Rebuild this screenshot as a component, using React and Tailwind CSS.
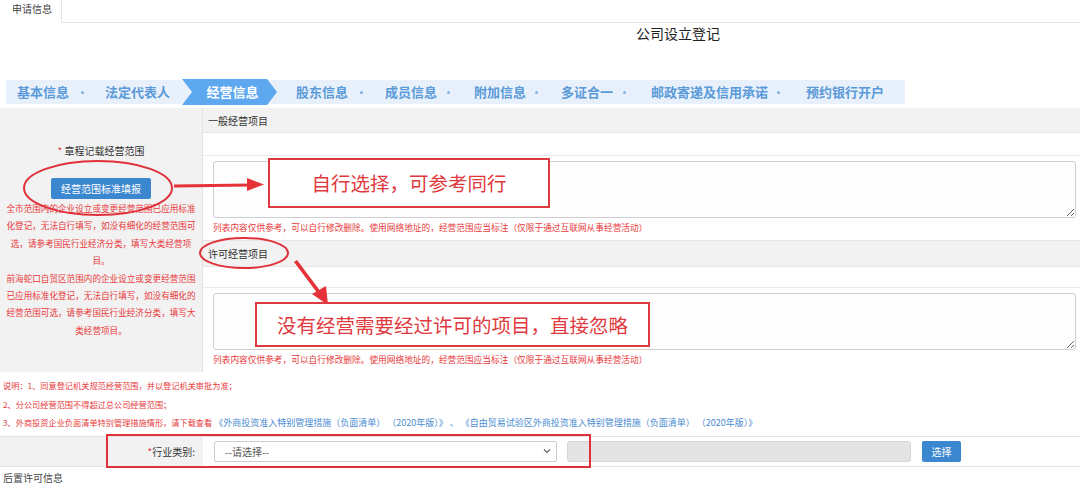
import React from 'react'

const Hint = () => (
  <p className="mt-[4px] text-[8.7px] leading-[12px] text-[#e8393b] whitespace-nowrap">
    列表内容仅供参考，可以自行修改删除。使用网络地址的，经营范围应当标注（仅限于通过互联网从事经营活动）
  </p>
)

const Dot = ({ className }) => (
  <span className={`inline-block w-[3px] h-[3px] rounded-full bg-[#7fb2e5] ${className}`}></span>
)

export default function App() {
  return (
    <div className="relative w-[1080px] h-[483px] overflow-hidden bg-white font-['Microsoft_YaHei','Noto_Sans_CJK_SC',sans-serif] text-[#333]">
      {/* 顶部标签 */}
      <div className="flex h-[23px]">
        <div className="w-[62px] border-r border-[#e6e6e6] pl-[12px] text-[10px] leading-[18px] text-[#444]">申请信息</div>
        <div className="flex-1 border-b border-[#e6e6e6]"></div>
      </div>

      <div className="h-[20px] pl-[636px] text-[14px] leading-[20px] text-[#222]">公司设立登记</div>

      {/* 步骤条 */}
      <div className="mt-[37px] ml-[6px] w-[899px] h-[24px] bg-[#e8f1fb] flex items-center text-[13px] font-bold text-[#5a9ad9]">
        <span className="ml-[11px]">基本信息</span>
        <Dot className="ml-[12px]" />
        <span className="ml-[21px]">法定代表人</span>
        <div className="ml-[12px] w-[95px] h-[26px] bg-[#5ea8ef] text-white flex items-center justify-center pl-[6px] [clip-path:polygon(0_0,85px_0,100%_50%,85px_100%,0_100%,10px_50%)]">
          经营信息
        </div>
        <span className="ml-[19px]">股东信息</span>
        <Dot className="ml-[12px]" />
        <span className="ml-[22px]">成员信息</span>
        <Dot className="ml-[10px]" />
        <span className="ml-[24px]">附加信息</span>
        <Dot className="ml-[9px]" />
        <span className="ml-[23px]">多证合一</span>
        <Dot className="ml-[10px]" />
        <span className="ml-[25px]">邮政寄递及信用承诺</span>
        <Dot className="ml-[9px]" />
        <span className="ml-[26px]">预约银行开户</span>
      </div>

      {/* 经营范围 */}
      <div className="mt-[4px] grid grid-cols-[203px_1fr] h-[264px] border-b border-[#e3e3e3]">
        <div className="bg-[#f2f2f2] border-r border-[#e3e3e3] flex flex-col items-center">
          <div className="pt-[37px] text-[10px] leading-[12px] text-[#333]">
            <span className="text-[#e8393b]">*</span> 章程记载经营范围
          </div>
          <button className="mt-[21px] w-[100px] h-[21px] rounded-[2px] bg-[#3b87d0] text-white text-[10px]">
            经营范围标准填报
          </button>
          <div className="mt-[1px] w-[194px] text-center text-[8.6px] leading-[17.4px] text-[#e8393b]">
            <p>全市范围内的企业设立或变更经营范围已应用标准化登记，无法自行填写，如没有细化的经营范围可选，请参考国民行业经济分类，填写大类经营项目。</p>
            <p>前海蛇口自贸区范围内的企业设立或变更经营范围已应用标准化登记，无法自行填写，如没有细化的经营范围可选，请参考国民行业经济分类，填写大类经营项目。</p>
          </div>
        </div>
        <div className="flex flex-col">
          <div className="h-[25px] bg-[#f2f2f2] border-b border-[#e6e6e6] pl-[5px] flex items-center text-[10px] text-[#333]">
            一般经营项目
          </div>
          <div className="h-[23px] bg-white border-b border-[#e8e8e8]"></div>
          <div className="h-[84px] bg-white pt-[5px] pl-[10px] pr-[4px]">
            <textarea
              readOnly
              className="block w-full h-[57px] border border-[#cfcfcf] rounded-[3px] bg-[#fdfdfd] resize-y outline-none"
            />
            <Hint />
          </div>
          <div className="h-[27px] bg-[#f2f2f2] border-t border-b border-[#e6e6e6] pl-[5px] flex items-center text-[10px] text-[#333]">
            许可经营项目
          </div>
          <div className="h-[21px] bg-white border-b border-[#e8e8e8]"></div>
          <div className="h-[84px] bg-white pt-[5px] pl-[10px] pr-[4px]">
            <textarea
              readOnly
              className="block w-full h-[57px] border border-[#cfcfcf] rounded-[3px] bg-[#fdfdfd] resize-y outline-none"
            />
            <Hint />
          </div>
        </div>
      </div>

      {/* 说明 */}
      <div className="pt-[4px] px-[3px] text-[8.2px] leading-[18.5px] text-[#e8393b] whitespace-nowrap">
        <p>说明：1、同意登记机关规范经营范围，并以登记机关审批为准；</p>
        <p>2、分公司经营范围不得超过总公司经营范围；</p>
        <p className="h-[18.5px]">
          3、外商投资企业负面清单特别管理措施情形，请下载查看
          <span className="text-[#4a8bd0] text-[9px] leading-[12px]"> 《外商投资准入特别管理措施（负面清单） （2020年版）》</span>
          <span className="text-[#4a8bd0] text-[9px] leading-[12px]"> 、 </span>
          <span className="text-[#4a8bd0] text-[9px] leading-[12px]">《自由贸易试验区外商投资准入特别管理措施（负面清单） （2020年版）》</span>
        </p>
      </div>

      {/* 行业类别 */}
      <div className="mt-[4px] grid grid-cols-[203px_1fr] h-[31px] border-t border-b border-[#e3e3e3]">
        <div className="bg-[#f2f2f2] flex items-center justify-end pr-[8px] text-[10px] text-[#333]">
          <span className="text-[#e8393b]">*</span>行业类别:
        </div>
        <div className="flex items-center pl-[11px]">
          <div className="w-[343px] h-[21px] border border-[#cccccc] rounded-[2px] bg-white flex items-center justify-between pl-[10px] pr-[5px] text-[10px] text-[#555]">
            <span>--请选择--</span>
            <svg width="8" height="6" viewBox="0 0 8 6" fill="none">
              <path d="M1 1.5 L4 4.5 L7 1.5" stroke="#666" strokeWidth="1.2" />
            </svg>
          </div>
          <div className="ml-[10px] w-[344px] h-[21px] border border-[#d6d6d6] rounded-[3px] bg-[#e4e4e4]"></div>
          <button className="ml-[11px] w-[39px] h-[21px] rounded-[2px] bg-[#3b87d0] text-white text-[10px]">选择</button>
        </div>
      </div>

      <div className="mt-[4px] pl-[3px] text-[10px] leading-[14px] text-[#444]">后置许可信息</div>

      {/* 标注 */}
      <svg className="absolute left-0 top-0 pointer-events-none" width="1080" height="483" viewBox="0 0 1080 483">
        <ellipse cx="98" cy="188" rx="74" ry="27" fill="none" stroke="#e0313a" strokeWidth="2" />
        <line x1="174" y1="186" x2="250" y2="185" stroke="#e53238" strokeWidth="3" />
        <polygon points="247,178 264,184.5 247,191" fill="#e53238" />
        <ellipse cx="244" cy="253" rx="44" ry="15" fill="none" stroke="#e0313a" strokeWidth="2" />
        <polygon points="294,262 297,260 321,292 318,294" fill="#e53238" />
        <polygon points="312,294 326,286 328,305" fill="#e53238" />
        <rect x="107" y="435" width="483" height="32" fill="none" stroke="#e0313a" strokeWidth="2" />
      </svg>

      <div className="absolute left-[268px] top-[158px] w-[282px] h-[50px] border-2 border-[#dc3a40] bg-white flex items-center justify-center text-[19.5px] text-[#e03a3e]">
        自行选择，可参考同行
      </div>
      <div className="absolute left-[255px] top-[302px] w-[395px] h-[45px] border-2 border-[#dc3a40] bg-white flex items-center justify-center text-[19.5px] text-[#e03a3e]">
        没有经营需要经过许可的项目，直接忽略
      </div>
    </div>
  )
}
